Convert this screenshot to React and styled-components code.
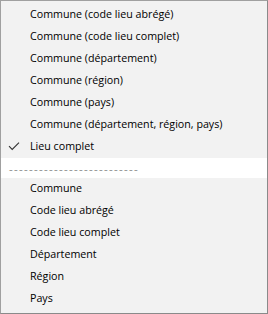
import React from 'react';
import styled, { createGlobalStyle } from 'styled-components';

const GlobalStyle = createGlobalStyle`
  html, body {
    margin: 0;
    padding: 0;
    background: #f2f2f2;
  }
`;

const Menu = styled.div`
  box-sizing: border-box;
  width: 268px;
  height: 314px;
  padding: 3px 0;
  background: #f2f2f2;
  border: 1px solid #a0a0a0;
  border-right-color: #8a8a8a;
  border-bottom-color: #8a8a8a;
  font-family: "Open Sans", "Noto Sans", sans-serif;
  font-size: 10.7px;
  color: #000;
  display: flex;
  flex-direction: column;
`;

const Item = styled.div`
  position: relative;
  box-sizing: border-box;
  height: 22px;
  display: flex;
  align-items: center;
  padding-left: 29px;
  padding-bottom: 2px;
  white-space: nowrap;
`;

const Check = styled.svg`
  position: absolute;
  left: 7px;
  top: 5px;
`;

const Separator = styled.div`
  height: 20px;
  background: #fff;
  display: flex;
  align-items: center;
  padding-left: 8px;
  color: #8c8c8c;
  font-size: 11.5px;
  letter-spacing: 1.3px;
  overflow: hidden;
  white-space: nowrap;
`;

const topItems = [
  'Commune (code lieu abrégé)',
  'Commune (code lieu complet)',
  'Commune (département)',
  'Commune (région)',
  'Commune (pays)',
  'Commune (département, région, pays)',
];

const bottomItems = [
  'Commune',
  'Code lieu abrégé',
  'Code lieu complet',
  'Département',
  'Région',
  'Pays',
];

const App = () => (
  <>
    <GlobalStyle />
    <Menu>
      {topItems.map((t) => (
        <Item key={t}>{t}</Item>
      ))}
      <Item>
        <Check width="12" height="10" viewBox="0 0 12 10">
          <path d="M1 5.2 L4.2 8.4 L11 1.6" fill="none" stroke="#333" strokeWidth="1.1" />
        </Check>
        Lieu complet
      </Item>
      <Separator>--------------------------</Separator>
      {bottomItems.map((t) => (
        <Item key={t}>{t}</Item>
      ))}
    </Menu>
  </>
);

export default App;
